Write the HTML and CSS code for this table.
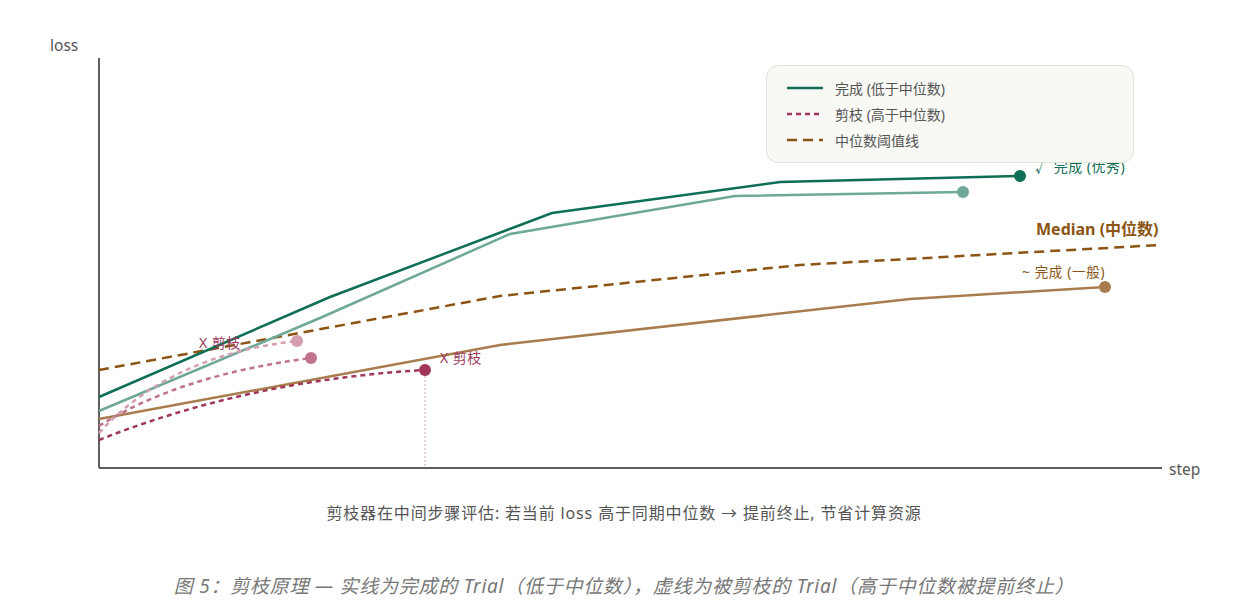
FILE: index.html
```html
<!DOCTYPE html>
<html lang="zh-CN">
<head>
<meta charset="utf-8">
<title>剪枝原理</title>
<link rel="stylesheet" href="styles.css">
</head>
<body>
<div class="figure">
  <div class="chart">
    <svg class="plot" width="1248" height="490" viewBox="0 0 1248 490">
      <!-- axes -->
      <line class="axis" x1="99" y1="58" x2="99" y2="468"/>
      <line class="axis" x1="99" y1="468" x2="1162" y2="468"/>
      <text class="axis-label" x="50" y="51">loss</text>
      <text class="axis-label" x="1169" y="475">step</text>

      <!-- median threshold -->
      <polyline class="median" points="99,370 500,296 800,265 1160,245"/>
      <text class="median-label" x="1036" y="235">Median (中位数)</text>

      <!-- completed: average -->
      <polyline class="tan" points="99,419 500,345 910,299 1105,287"/>
      <circle class="dot-tan" cx="1105" cy="287" r="6"/>
      <text class="lbl-tan" x="1022" y="277">~ 完成 (一般)</text>

      <!-- completed: light green -->
      <polyline class="green-light" points="99,411 320,318 510,234 735,196 963,192"/>
      <circle class="dot-green-light" cx="963" cy="192" r="6"/>

      <!-- completed: dark green -->
      <polyline class="green" points="99,397 330,297 552,213 780,182 1020,176"/>
      <circle class="dot-green" cx="1020" cy="176" r="6"/>
      <text class="lbl-green" x="1035" y="172">√ 完成 (优秀)</text>

      <!-- pruned curves -->
      <path class="prune-light" d="M99,433 Q170,355 297,341"/>
      <circle class="dot-prune-light" cx="297" cy="341" r="6"/>
      <path class="prune-mid" d="M99,426 Q180,375 311,358"/>
      <circle class="dot-prune-mid" cx="311" cy="358" r="6"/>
      <line class="guide" x1="425" y1="376" x2="425" y2="468"/>
      <path class="prune-dark" d="M99,440 Q250,380 425,370"/>
      <circle class="dot-prune-dark" cx="425" cy="370" r="6"/>

      <text class="lbl-prune" x="199" y="348">X 剪枝</text>
      <text class="lbl-prune" x="440" y="363">X 剪枝</text>
    </svg>

    <div class="legend">
      <div class="legend-row">
        <svg class="legend-swatch" width="36" height="6"><line class="green" x1="0" y1="3" x2="36" y2="3"/></svg>
        <span>完成 (低于中位数)</span>
      </div>
      <div class="legend-row">
        <svg class="legend-swatch" width="36" height="6"><line class="prune-dark" x1="0" y1="3" x2="36" y2="3"/></svg>
        <span>剪枝 (高于中位数)</span>
      </div>
      <div class="legend-row">
        <svg class="legend-swatch" width="36" height="6"><line class="median" x1="0" y1="3" x2="36" y2="3"/></svg>
        <span>中位数阈值线</span>
      </div>
    </div>
  </div>

  <p class="note">剪枝器在中间步骤评估: 若当前 loss 高于同期中位数 → 提前终止, 节省计算资源</p>
  <p class="caption">图 5：剪枝原理 — 实线为完成的 Trial（低于中位数），虚线为被剪枝的 Trial（高于中位数被提前终止）</p>
</div>
</body>
</html>
```

FILE: styles.css
```css
html, body {
  margin: 0;
  padding: 0;
  background: #ffffff;
}

body {
  width: 1248px;
  height: 614px;
  overflow: hidden;
  font-family: "Noto Sans", "Noto Sans CJK SC", sans-serif;
}

.figure {
  display: flex;
  flex-direction: column;
  align-items: center;
}

.chart {
  position: relative;
  width: 1248px;
  height: 490px;
}

.plot {
  display: block;
}

.axis {
  stroke: #5f5f5a;
  stroke-width: 2;
}

.axis-label {
  font-family: "Noto Sans", "Noto Sans CJK SC", sans-serif;
  font-size: 15.5px;
  fill: #555555;
}

.median {
  fill: none;
  stroke: #8b5412;
  stroke-width: 2.5;
  stroke-dasharray: 10 6;
}

.median-label {
  font-family: "Noto Sans", "Noto Sans CJK SC", sans-serif;
  font-size: 16px;
  font-weight: 700;
  fill: #8b5412;
}

.tan {
  fill: none;
  stroke: #a87d4e;
  stroke-width: 2.5;
}

.dot-tan { fill: #a87d4e; }

.lbl-tan {
  font-family: "Noto Sans", "Noto Sans CJK SC", sans-serif;
  font-size: 13.5px;
  letter-spacing: 0.7px;
  fill: #8b5412;
}

.green-light {
  fill: none;
  stroke: #6ea898;
  stroke-width: 2.5;
}

.dot-green-light { fill: #6ea898; }

.green {
  fill: none;
  stroke: #0f6e56;
  stroke-width: 2.5;
}

.dot-green { fill: #0f6e56; }

.lbl-green {
  font-family: "Noto Sans", "Noto Sans CJK SC", sans-serif;
  font-size: 14px;
  letter-spacing: 0.5px;
  fill: #0f6e56;
}

.prune-light {
  fill: none;
  stroke: #d49fb1;
  stroke-width: 2.5;
  stroke-dasharray: 5 4;
}

.dot-prune-light { fill: #d49fb1; }

.prune-mid {
  fill: none;
  stroke: #c0738c;
  stroke-width: 2.5;
  stroke-dasharray: 5 4;
}

.dot-prune-mid { fill: #c0738c; }

.prune-dark {
  fill: none;
  stroke: #a0365a;
  stroke-width: 2.5;
  stroke-dasharray: 5 4;
}

.dot-prune-dark { fill: #a0365a; }

.guide {
  stroke: #d4a0b2;
  stroke-width: 1;
  stroke-dasharray: 2 2;
}

.lbl-prune {
  font-family: "Noto Sans", "Noto Sans CJK SC", sans-serif;
  font-size: 14px;
  letter-spacing: 0.5px;
  fill: #9c3a5e;
}

.legend {
  position: absolute;
  left: 766px;
  top: 65px;
  width: 368px;
  height: 98px;
  box-sizing: border-box;
  padding: 12px 20px;
  background: #f8f8f4;
  border: 1px solid #e2e2da;
  border-radius: 12px;
  display: flex;
  flex-direction: column;
  justify-content: center;
  gap: 6px;
}

.legend-row {
  display: flex;
  align-items: center;
  gap: 12px;
  height: 20px;
  font-size: 14px;
  color: #555555;
}

.legend-swatch {
  display: block;
  flex: none;
}

.note {
  margin: 13px 0 0;
  font-size: 16px;
  letter-spacing: 0.85px;
  line-height: 20px;
  color: #555555;
  text-align: center;
}

.caption {
  margin: 50px 0 0;
  font-size: 19px;
  letter-spacing: 0.75px;
  line-height: 26px;
  font-style: italic;
  color: #777777;
  text-align: center;
}
```
